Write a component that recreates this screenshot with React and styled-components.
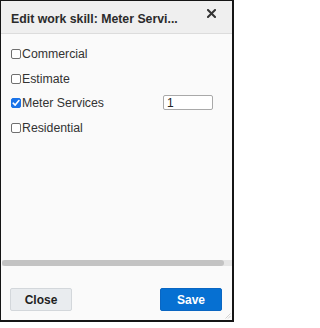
import React, { useState } from 'react';
import styled, { createGlobalStyle } from 'styled-components';

const GlobalStyle = createGlobalStyle`
    html, body {
        margin: 0;
        padding: 0;
        background: #ffffff;
    }
    body {
        font-family: 'Liberation Sans', Arial, sans-serif;
    }
`;

const Dialog = styled.div`
    position: relative;
    box-sizing: border-box;
    width: 234px;
    height: 322px;
    border: 2px solid #151515;
    border-top-width: 1px;
    border-left-width: 1px;
    background: #fafafa;
    display: flex;
    flex-direction: column;
`;

const Header = styled.div`
    box-sizing: border-box;
    height: 33px;
    flex: none;
    display: flex;
    align-items: center;
    justify-content: space-between;
    padding: 3px 15px 0 10px;
    background: #efefef;
    border-bottom: 1px solid #dcdcdc;
`;

const Title = styled.div`
    font-size: 12.3px;
    font-weight: bold;
    color: #2b2b2b;
    white-space: nowrap;
`;

const CloseX = styled.button`
    border: 0;
    background: none;
    padding: 0;
    margin-top: -10px;
    width: 11px;
    height: 11px;
    display: flex;
    align-items: center;
    justify-content: center;
    cursor: pointer;
`;

const Body = styled.div`
    flex: 1;
    padding: 8px 0 0 10px;
    display: flex;
    flex-direction: column;
`;

const Row = styled.label`
    height: 24.5px;
    display: flex;
    align-items: center;
    font-size: 12.3px;
    color: #333;
    cursor: pointer;
`;

const Box = styled.span`
    box-sizing: border-box;
    width: 10px;
    height: 10px;
    margin: 0 1px 0 0;
    border-radius: 2px;
    border: 1px solid ${p => p.$checked ? '#1a73e8' : '#6f6f6f'};
    background: ${p => p.$checked ? '#1a73e8' : '#ffffff'};
    display: flex;
    align-items: center;
    justify-content: center;
`;

const Label = styled.span`
    width: 141px;
`;

const Amount = styled.input`
    box-sizing: border-box;
    width: 50px;
    height: 15px;
    border: 1px solid #a9a9a9;
    border-radius: 2px;
    padding: 0 3px;
    font-family: 'Liberation Sans', Arial, sans-serif;
    font-size: 12px;
    color: #222;
    background: #fff;
    margin-top: -1px;
`;

const Track = styled.div`
    flex: none;
    height: 6px;
    margin: 0 0 0 1px;
    background: #e6e6e6;
    display: flex;
`;

const Thumb = styled.div`
    width: 222px;
    border-radius: 3px;
    background: #c3c3c3;
`;

const Footer = styled.div`
    flex: none;
    height: 54px;
    box-sizing: border-box;
    padding: 22px 10px 0 9px;
    display: flex;
    justify-content: space-between;
    align-items: flex-start;
`;

const Button = styled.button`
    box-sizing: border-box;
    width: 62px;
    height: 23px;
    border-radius: 2px;
    font-family: 'Liberation Sans', Arial, sans-serif;
    font-size: 12px;
    font-weight: bold;
    cursor: pointer;
    border: 1px solid ${p => p.$primary ? '#0a66c2' : '#d3d7db'};
    background: ${p => p.$primary ? '#0670d2' : '#e9ecef'};
    color: ${p => p.$primary ? '#ffffff' : '#1f1f1f'};
`;

const Grip = styled.svg`
    position: absolute;
    right: 1px;
    bottom: 1px;
`;

const skills = [
    { name: 'Commercial', checked: false },
    { name: 'Estimate', checked: false },
    { name: 'Meter Services', checked: true, amount: '1' },
    { name: 'Residential', checked: false }
];

const Check = () => (
    <svg width="8" height="8" viewBox="0 0 8 8">
        <path d="M1.2 4.2 L3.2 6.1 L6.9 1.6" fill="none" stroke="#fff" strokeWidth="1.6" strokeLinecap="round" strokeLinejoin="round" />
    </svg>
);

export default function App () {
    const [items, setItems] = useState(skills);
    const toggle = (i) => {
        setItems(items.map((it, j) => j === i ? { ...it, checked: !it.checked } : it));
    };
    return (
        <>
            <GlobalStyle />
            <Dialog>
                <Header>
                    <Title>Edit work skill: Meter Servi...</Title>
                    <CloseX aria-label="Close">
                        <svg width="9" height="9" viewBox="0 0 9 9">
                            <path d="M1 1 L8 8 M8 1 L1 8" stroke="#333" strokeWidth="2" strokeLinecap="square" />
                        </svg>
                    </CloseX>
                </Header>
                <Body>
                    {items.map((it, i) => (
                        <Row key={it.name} onClick={() => toggle(i)}>
                            <Box $checked={it.checked}>{it.checked && <Check />}</Box>
                            <Label>{it.name}</Label>
                            {it.amount && <Amount defaultValue={it.amount} onClick={e => e.stopPropagation()} />}
                        </Row>
                    ))}
                </Body>
                <Track>
                    <Thumb />
                </Track>
                <Footer>
                    <Button>Close</Button>
                    <Button $primary>Save</Button>
                </Footer>
                <Grip width="6" height="6" viewBox="0 0 6 6">
                    <path d="M5.5 0.5 L0.5 5.5 M5.5 3 L3 5.5" stroke="#c8c8c8" strokeWidth="0.8" />
                </Grip>
            </Dialog>
        </>
    );
}
